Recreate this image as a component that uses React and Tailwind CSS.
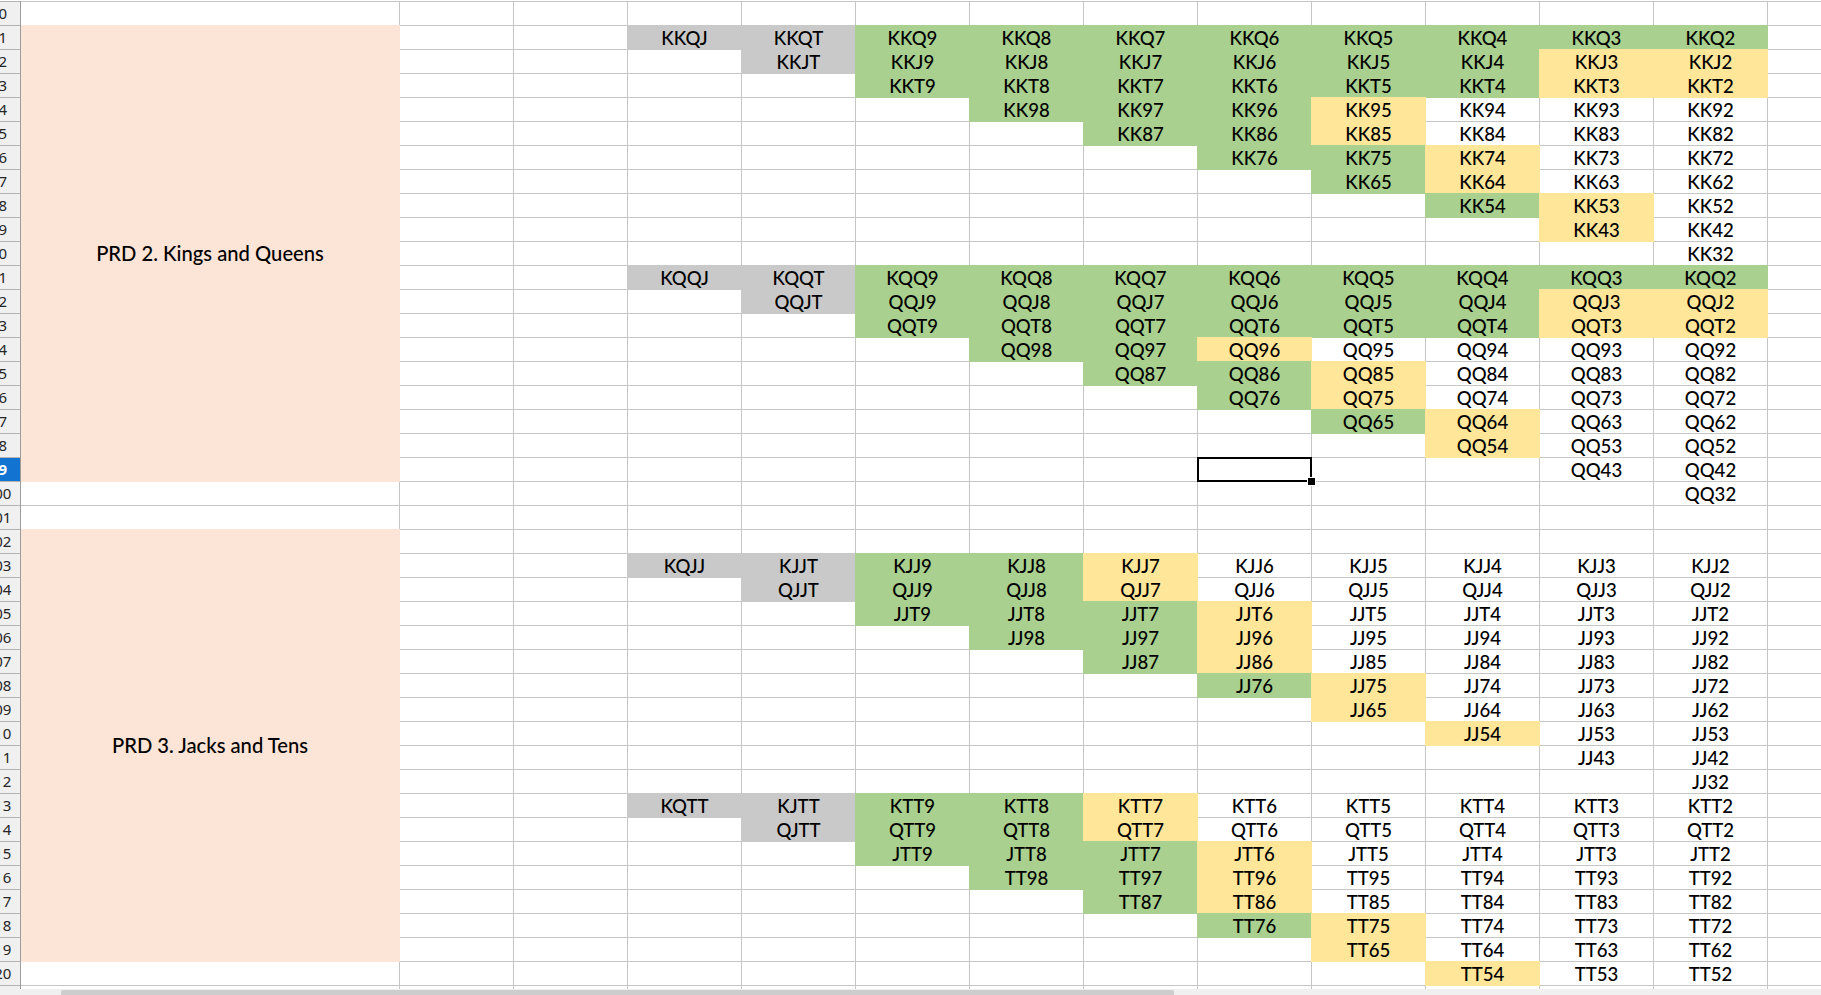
import React from "react";

const FILL = {
  s: "bg-[#c9c9c9] shadow-[0_0_0_1px_#c9c9c9]",
  g: "bg-[#a9d08e] shadow-[0_0_0_1px_#a9d08e]",
  y: "bg-[#ffe699] shadow-[0_0_0_1px_#ffe699]",
  w: "bg-white",
};

const DATA = {
  81: "KKQJ:s KKQT:s KKQ9:g KKQ8:g KKQ7:g KKQ6:g KKQ5:g KKQ4:g KKQ3:g KKQ2:g",
  82: ". KKJT:s KKJ9:g KKJ8:g KKJ7:g KKJ6:g KKJ5:g KKJ4:g KKJ3:y KKJ2:y",
  83: ". . KKT9:g KKT8:g KKT7:g KKT6:g KKT5:g KKT4:g KKT3:y KKT2:y",
  84: ". . . KK98:g KK97:g KK96:g KK95:y KK94 KK93 KK92",
  85: ". . . . KK87:g KK86:g KK85:y KK84 KK83 KK82",
  86: ". . . . . KK76:g KK75:g KK74:y KK73 KK72",
  87: ". . . . . . KK65:g KK64:y KK63 KK62",
  88: ". . . . . . . KK54:g KK53:y KK52",
  89: ". . . . . . . . KK43:y KK42",
  90: ". . . . . . . . . KK32",
  91: "KQQJ:s KQQT:s KQQ9:g KQQ8:g KQQ7:g KQQ6:g KQQ5:g KQQ4:g KQQ3:g KQQ2:g",
  92: ". QQJT:s QQJ9:g QQJ8:g QQJ7:g QQJ6:g QQJ5:g QQJ4:g QQJ3:y QQJ2:y",
  93: ". . QQT9:g QQT8:g QQT7:g QQT6:g QQT5:g QQT4:g QQT3:y QQT2:y",
  94: ". . . QQ98:g QQ97:g QQ96:y QQ95 QQ94 QQ93 QQ92",
  95: ". . . . QQ87:g QQ86:g QQ85:y QQ84 QQ83 QQ82",
  96: ". . . . . QQ76:g QQ75:y QQ74 QQ73 QQ72",
  97: ". . . . . . QQ65:g QQ64:y QQ63 QQ62",
  98: ". . . . . . . QQ54:y QQ53 QQ52",
  99: ". . . . . . . . QQ43 QQ42",
  100: ". . . . . . . . . QQ32",
  103: "KQJJ:s KJJT:s KJJ9:g KJJ8:g KJJ7:y KJJ6 KJJ5 KJJ4 KJJ3 KJJ2",
  104: ". QJJT:s QJJ9:g QJJ8:g QJJ7:y QJJ6 QJJ5 QJJ4 QJJ3 QJJ2",
  105: ". . JJT9:g JJT8:g JJT7:g JJT6:y JJT5 JJT4 JJT3 JJT2",
  106: ". . . JJ98:g JJ97:g JJ96:y JJ95 JJ94 JJ93 JJ92",
  107: ". . . . JJ87:g JJ86:y JJ85 JJ84 JJ83 JJ82",
  108: ". . . . . JJ76:g JJ75:y JJ74 JJ73 JJ72",
  109: ". . . . . . JJ65:y JJ64 JJ63 JJ62",
  110: ". . . . . . . JJ54:y JJ53 JJ53",
  111: ". . . . . . . . JJ43 JJ42",
  112: ". . . . . . . . . JJ32",
  113: "KQTT:s KJTT:s KTT9:g KTT8:g KTT7:y KTT6 KTT5 KTT4 KTT3 KTT2",
  114: ". QJTT:s QTT9:g QTT8:g QTT7:y QTT6 QTT5 QTT4 QTT3 QTT2",
  115: ". . JTT9:g JTT8:g JTT7:g JTT6:y JTT5 JTT4 JTT3 JTT2",
  116: ". . . TT98:g TT97:g TT96:y TT95 TT94 TT93 TT92",
  117: ". . . . TT87:g TT86:y TT85 TT84 TT83 TT82",
  118: ". . . . . TT76:g TT75:y TT74 TT73 TT72",
  119: ". . . . . . TT65:y TT64 TT63 TT62",
  120: ". . . . . . . TT54:y TT53 TT52",
};

const ROWS = [];
for (let r = 80; r <= 121; r++) ROWS.push(r);

function Cell({ text, fill, selected }) {
  return (
    <div
      className={`flex items-center justify-center text-[18.6px] leading-none text-black ${
        selected ? "relative" : ""
      } ${FILL[fill] || FILL.w}`}
    >
      {text ? <span className="pt-px">{text}</span> : null}
      {selected ? (
        <div className="pointer-events-none absolute -left-px -top-px z-10 h-[25px] w-[115px] border-2 border-black">
          <div className="absolute -bottom-[6px] -right-[6px] h-[9px] w-[9px] border border-white bg-black" />
        </div>
      ) : null}
    </div>
  );
}

function Sheet() {
  const cells = [];
  ROWS.forEach((r) => {
    if (r === 81) {
      cells.push(
        <div
          key={`A${r}`}
          className="row-[span_19/span_19] flex items-center justify-center bg-[#fce4d6] shadow-[0_0_0_1px_#fce4d6] text-[20.2px] leading-none text-black"
        >
          PRD 2. Kings and Queens
        </div>
      );
    } else if (r === 102) {
      cells.push(
        <div
          key={`A${r}`}
          className="row-[span_18/span_18] flex items-center justify-center bg-[#fce4d6] shadow-[0_0_0_1px_#fce4d6] text-[20.2px] leading-none text-black"
        >
          PRD 3. Jacks and Tens
        </div>
      );
    } else if ((r > 81 && r <= 99) || (r > 102 && r <= 119)) {
      // covered by merged cell
    } else {
      cells.push(<Cell key={`A${r}`} />);
    }
    cells.push(<Cell key={`B${r}`} />);
    cells.push(<Cell key={`C${r}`} />);
    const parts = DATA[r] ? DATA[r].split(" ") : [];
    for (let i = 0; i < 10; i++) {
      const p = parts[i];
      let text = "";
      let fill = "w";
      if (p && p !== ".") {
        const [t, f] = p.split(":");
        text = t;
        fill = f || "w";
      }
      cells.push(
        <Cell key={`D${r}-${i}`} text={text} fill={fill} selected={r === 99 && i === 5} />
      );
    }
    cells.push(<Cell key={`N${r}`} />);
  });

  return (
    <div className="grid min-w-0 flex-1 grid-cols-[378px_repeat(12,113px)_1fr] auto-rows-[23px] gap-px overflow-hidden bg-[#c6c6c6] pt-px font-['Lato','Liberation_Sans',sans-serif] font-medium">
      {cells}
    </div>
  );
}

function RowHeader() {
  return (
    <div className="flex w-[21px] shrink-0 flex-col gap-px overflow-hidden border-r border-[#9c9c9c] bg-[#b4b4b4] pt-px font-['Noto_Sans','Liberation_Sans',sans-serif] text-[15px] leading-none">
      {ROWS.map((r) => {
        const sel = r === 99;
        return (
          <div
            key={r}
            className={`flex h-[23px] shrink-0 items-center overflow-hidden ${
              sel ? "bg-[#1273d0] font-bold text-white" : "bg-[#f0f0f0] text-[#262626]"
            }`}
          >
            <div className="-ml-[23px] w-[43px] shrink-0 text-center">{r}</div>
          </div>
        );
      })}
    </div>
  );
}

export default function App() {
  return (
    <div className="flex h-[995px] w-[1821px] flex-col overflow-hidden bg-white">
      <div className="flex min-h-0 flex-1 pt-px">
        <RowHeader />
        <Sheet />
      </div>
      <div className="flex h-[6px] shrink-0 bg-[#f0f0f0]">
        <div className="ml-[61px] mt-px h-[5px] w-[1113px] rounded-t-[2px] bg-[#cdcdcd]" />
      </div>
    </div>
  );
}
